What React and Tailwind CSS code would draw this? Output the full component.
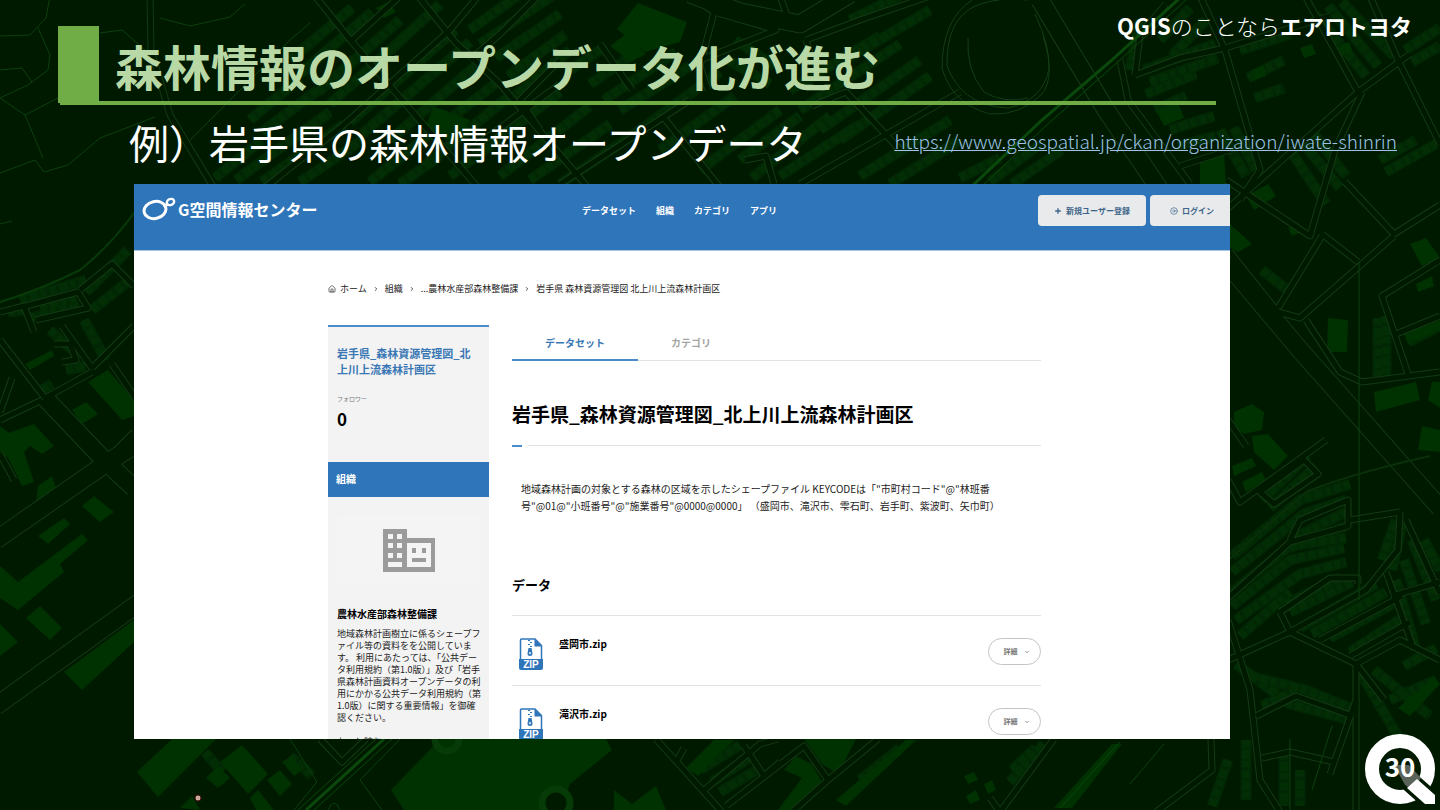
import React from 'react';
import { ChevronDown, ChevronRight, CircleArrowRight, House, Plus } from 'lucide-react';

const navItems = ['データセット', '組織', 'カテゴリ', 'アプリ'];

const crumbs = ['ホーム', '組織', '...農林水産部森林整備課', '岩手県 森林資源管理図 北上川上流森林計画区'];

const orgLines = [
  '地域森林計画樹立に係るシェープフ',
  'ァイル等の資料をを公開していま',
  'す。 利用にあたっては、「公共デー',
  'タ利用規約（第1.0版）」及び「岩手',
  '県森林計画資料オープンデータの利',
  '用にかかる公共データ利用規約（第',
  '1.0版）に関する重要情報」を御確',
  '認ください。',
];

const files = ['盛岡市.zip', '滝沢市.zip'];

// rows of small houses, drawn as dashed strokes
const houseRows = [
  'M290 60 L352 8', 'M300 74 L372 12', 'M318 92 L400 20', 'M330 104 L412 30', 'M350 122 L455 30', 'M362 134 L470 42',
  'M250 120 L300 78', 'M262 132 L318 90', 'M215 178 L262 140', 'M236 180 L330 112', 'M262 182 L344 124', 'M300 182 L362 140',
  'M380 60 L440 4', 'M470 30 L520 -6', 'M480 44 L552 -4', 'M496 58 L560 14', 'M508 76 L566 34', 'M410 150 L500 80',
  'M424 166 L512 94', 'M450 176 L560 92', 'M500 176 L590 106', 'M530 180 L610 124', 'M560 184 L640 130', 'M620 110 L690 66',
  'M640 130 L720 72', 'M660 150 L735 96', 'M700 170 L780 110', 'M735 40 L775 66', 'M728 60 L770 84', 'M790 90 L880 36',
  'M800 110 L900 44', 'M820 130 L920 60', 'M780 176 L860 124', 'M845 60 L930 10', 'M850 20 L900 -4', 'M860 176 L950 120',
  'M890 184 L960 140', 'M1144 70 L1215 44', 'M1150 82 L1218 58', 'M1146 94 L1196 74', 'M1155 110 L1186 96', 'M1170 130 L1214 116',
  'M1178 146 L1216 136', 'M1220 130 L1246 176', 'M1234 128 L1256 170', 'M1240 50 L1290 34', 'M1248 78 L1284 60', 'M1255 98 L1284 88',
  'M1315 14 L1366 76', 'M1328 6 L1378 66', 'M1342 2 L1394 56', 'M1405 50 L1440 28', 'M1412 62 L1440 46', 'M1290 150 L1326 204',
  'M1302 142 L1340 188', 'M1314 134 L1346 176', 'M1380 160 L1416 140', 'M1386 172 L1436 144', 'M1262 270 L1290 292',
  'M1378 318 L1378 380', 'M1386 316 L1386 378', 'M1408 342 L1440 326', 'M1262 500 L1308 456', 'M1270 508 L1316 466',
  'M1232 556 L1300 500 L1350 484', 'M1232 572 L1304 514 L1346 500', 'M1294 538 L1346 512', 'M1290 548 L1346 526',
  'M1232 592 L1290 546 L1346 538', 'M1232 606 L1290 560 L1344 548', 'M1236 620 L1300 574 L1346 562', 'M1286 604 L1340 578',
  'M1290 612 L1352 582', 'M1240 636 L1290 592', 'M1300 628 L1376 584', 'M1312 634 L1386 592', 'M1330 638 L1400 600',
  'M1350 652 L1402 618', 'M1382 560 L1396 520', 'M1392 570 L1402 524', 'M1404 560 L1426 624', 'M1412 540 L1436 600',
  'M1396 580 L1416 650', 'M1424 540 L1440 570', 'M1236 664 L1290 704 L1350 720', 'M1250 676 L1306 690 L1350 708',
  'M1262 706 L1298 690', 'M1246 740 L1246 800', 'M1360 672 L1400 740', 'M1374 670 L1430 716', 'M1390 700 L1436 680',
  'M1404 666 L1436 648', 'M40 308 L76 298', 'M30 318 L80 306', 'M8 312 L24 310', 'M50 330 L72 350', 'M84 320 L106 360',
  'M92 310 L130 280', 'M66 370 L86 366', 'M86 292 L128 250', 'M20 300 L86 280', 'M42 390 L52 384', 'M700 770 L740 745',
  'M712 782 L752 756', 'M720 792 L760 768', 'M860 780 L900 748', 'M1012 770 L1036 748', 'M1010 782 L1044 744',
  'M205 752 L222 772', 'M290 756 L312 776', 'M1284 752 L1284 806', 'M1300 770 L1300 806', 'M1228 760 L1212 806',
  'M510 100 L570 50', 'M390 140 L480 62', 'M370 182 L420 142', 'M400 184 L440 156', 'M570 70 L606 46', 'M590 84 L640 50',
  'M604 100 L676 52', 'M740 160 L800 116', 'M752 178 L830 116', 'M840 140 L930 76', 'M960 178 L1000 158', 'M990 182 L1040 144',
  'M1012 184 L1062 150', 'M1130 70 L1140 20', 'M1160 40 L1190 8', 'M1172 56 L1206 20',
];

const buildings = [
  'M617 29 L638 3 L687 22 L680 42 L645 52 Z', 'M433 106 L470 120 L456 142 L424 132 Z', 'M610 46 L626 34 L646 54 L630 62 Z',
  'M1156 110 L1178 102 L1184 118 L1164 126 Z', 'M1200 162 L1224 154 L1226 184 L1200 184 Z', 'M1410 244 L1426 238 L1440 258 L1422 266 Z',
  'M1246 196 L1268 184 L1276 196 L1254 210 Z', 'M1230 224 L1252 244 L1238 252 L1230 248 Z', 'M1328 318 L1348 320 L1347 352 L1327 352 Z',
  'M1374 392 L1416 382 L1420 400 L1376 412 Z', 'M1432 382 L1440 382 L1440 408 L1428 400 Z', 'M1422 426 L1440 430 L1440 452 L1418 450 Z',
  'M1234 412 L1252 404 L1264 412 L1262 430 L1244 434 L1234 426 Z', 'M1252 436 L1268 434 L1288 456 L1274 470 L1254 452 Z',
  'M1242 482 L1262 472 L1266 480 L1246 492 Z', 'M1232 466 L1252 458 L1256 466 L1234 476 Z', 'M1416 284 L1432 276 L1434 286 L1418 292 Z',
  'M1404 334 L1440 320 L1440 330 L1408 344 Z', 'M1288 228 L1298 222 L1302 232 L1292 236 Z',
  'M25 364 L52 350 L54 356 L30 370 Z', 'M88 382 L108 370 L134 400 L134 416 L122 420 Z', 'M72 410 L86 402 L98 414 L82 424 Z',
  'M0 436 L34 424 L54 446 L42 454 L30 446 L24 452 L34 482 L22 486 L8 458 L0 452 Z', 'M38 486 L52 476 L56 488 L36 504 Z',
  'M82 506 L94 496 L114 512 L100 522 Z', 'M38 536 L64 518 L70 524 L48 544 Z', 'M0 566 L18 582 L82 534 L88 540 L60 564 L64 572 L18 610 L0 598 Z',
  'M26 618 L40 606 L62 628 L50 640 Z', 'M0 624 L18 642 L0 656 Z', 'M64 672 L134 620 L134 642 L82 690 Z', 'M0 426 L10 434 L0 438 Z',
  'M137 772 L172 739 L216 739 L158 797 Z', 'M220 762 L242 745 L268 774 L248 794 Z', 'M206 778 L218 766 L230 778 L218 788 Z',
  'M267 780 L280 770 L292 784 L280 796 Z', 'M282 762 L292 756 L302 770 L294 776 Z', 'M250 798 L258 790 L274 810 L256 810 Z',
  'M391 790 L440 739 L606 739 L612 750 L570 784 L560 810 L404 810 Z', 'M614 790 L632 804 L656 786 L666 810 L614 810 Z',
  'M686 768 L714 740 L734 740 L698 776 Z', 'M778 810 L802 778 L784 770 L796 756 L812 764 L824 786 L796 810 Z',
  'M804 739 L856 739 L838 774 L822 764 Z', 'M836 800 L906 740 L916 740 L846 806 Z', 'M964 776 L974 772 L978 780 L968 784 Z',
  'M966 796 L976 790 L980 800 L970 804 Z', 'M984 784 L992 780 L996 790 L988 794 Z', 'M1054 808 L1112 744 L1122 744 L1072 808 Z',
  'M180 808 L192 796 L200 810 Z', 'M1398 708 L1434 676 L1440 684 L1410 716 Z', 'M1300 48 L1312 44 L1316 54 L1304 58 Z',
  'M1338 46 L1350 42 L1352 52 L1340 56 Z', 'M1252 70 L1264 66 L1266 76 L1254 80 Z', 'M376 8 L388 2 L396 12 L384 18 Z',
];

const streets = [
  'M315 -4 L352 42 L480 190', 'M418 -4 L455 42 L500 84 L590 190', 'M480 -6 L450 30 L340 128 L262 190', 'M352 40 L400 -4',
  'M150 -4 L151 50 L170 115 L215 190', 'M538 -4 L500 34 L470 60', 'M560 60 L520 100 L540 130', 'M600 44 L632 90',
  'M470 150 L560 84', 'M560 184 L690 100', 'M664 118 L722 190', 'M690 -4 L714 12 L776 30 L700 60', 'M714 12 L700 66 L708 90',
  'M780 -4 L790 24', 'M806 40 L860 20 L930 -4', 'M806 40 L812 60', 'M812 106 L846 92 L900 150', 'M745 160 L766 156 L774 184', 'M800 184 L960 92',
  'M1135 75 L1140 34 L1166 4', 'M1200 -4 L1225 50 L1260 170 L1240 200', 'M1135 75 L1180 58 L1225 48 L1330 16', 'M1120 60 L1128 100 L1190 184',
  'M1180 166 L1230 150', 'M1370 -4 L1398 60 L1440 144', 'M1305 -4 L1358 92 L1410 54', 'M1362 92 L1335 150 L1310 236 L1226 180',
  'M1358 92 L1262 178 L1226 210', 'M1345 182 L1394 234 L1440 205', 'M1394 236 L1300 318 L1278 312 L1230 252', 'M1322 236 L1278 308', 'M1358 262 L1322 234',
  'M1440 260 L1382 296 L1408 374', 'M1396 334 L1440 316', 'M1306 320 L1340 372 L1362 382 L1440 372', 'M1228 420 L1246 446', 'M1228 480 L1240 502 L1326 440',
  'M1260 492 L1304 460 L1318 474 L1274 504 Z', 'M1228 598 L1290 542 L1348 526 L1348 500 L1300 520 L1290 540', 'M1350 520 L1400 512', 'M1400 512 L1398 550 L1366 590 L1290 632',
  'M1280 612 L1330 578 L1358 578 L1358 584', 'M1280 612 L1290 632 L1356 664 L1384 700', 'M1320 640 L1402 596', 'M1350 656 L1410 622', 'M1386 572 L1412 644',
  'M1406 520 L1440 594', 'M1392 596 L1440 582', 'M1228 660 L1290 632', 'M1228 620 L1250 690 L1260 780 L1280 812', 'M1256 716 L1296 696 L1330 708 L1352 716',
  'M1356 664 L1356 700 L1330 774', 'M1356 664 L1400 640 L1440 660', 'M1262 758 L1290 752 L1334 762', 'M1211 739 L1212 770 L1156 812', 'M1356 700 L1356 812',
  'M0 312 L24 306 L34 332', 'M26 306 L78 292 L88 308 L36 320', 'M80 290 L112 264 L134 286', 'M62 326 L92 368', 'M92 368 L134 326', 'M0 340 L45 398 L92 372',
  'M0 420 L42 400', 'M12 378 L0 412', 'M112 364 L134 396', 'M54 344 L70 344 L76 360 L62 362', 'M0 454 L14 480', 'M114 452 L134 432',
  'M656 739 L722 812', 'M676 762 L684 748', 'M704 790 L760 744 L778 739', 'M726 806 L804 746 L828 780 L792 812', 'M828 780 L878 739',
  'M744 746 L764 776 L780 762', 'M1054 739 L1000 812 L990 798', 'M320 739 L342 762 L366 739',
];

const avenues = [
  'M45 398 L106 462 L134 488', 'M-4 540 L108 462 L140 442', 'M-4 706 L140 602', 'M1040 0 L1106 110 L1160 190', 'M1226 262 L1300 350 L1440 508',
  'M690 -6 L740 12 L800 24 L850 -6',
];

const contours = [
  'M0 36 L30 35 L46 18 L50 -4', 'M38 28 L50 55 L48 70 L28 85 L0 98', 'M0 98 L25 115 L43 158', 'M25 115 L62 96', 'M0 70 L22 68 L32 82',
  'M0 173 L35 160 L44 172 L68 165 L100 138 L155 117', 'M160 18 L190 26 L230 17 L245 4', 'M100 33 L122 30 L145 50', 'M0 224 L12 221',
  'M310 23 L290 40 L190 140', 'M1290 739 L1290 812', 'M1359 262 L1359 600', 'M1164 744 L1130 784', 'M290 739 L317 782 L294 810', 'M400 739 L360 780 L382 810',
  'M328 810 Q334 796 340 810', 'M1332 726 L1312 790',
];

function MapBackdrop() {
  return (
    <svg
      className="absolute inset-0 h-full w-full"
      viewBox="0 0 1440 810"
      preserveAspectRatio="xMidYMid slice"
      fill="none"
      aria-hidden="true"
    >
      <rect width="1440" height="810" fill="#001a00" />
      <g stroke="#022704" strokeWidth="11">
        {houseRows.map((d) => <path key={d} d={d} />)}
      </g>
      <g stroke="#032d05" strokeWidth="8" strokeDasharray="7 3 9 2 6 4">
        {houseRows.map((d) => <path key={d} d={d} />)}
      </g>
      <g fill="#003100">
        {buildings.map((d) => <path key={d} d={d} />)}
      </g>
      <g stroke="#143a15" strokeLinejoin="round">
        {avenues.map((d) => <path key={d} d={d} strokeWidth="19" />)}
        {streets.map((d) => <path key={d} d={d} strokeWidth="7" />)}
      </g>
      <g stroke="#001a00" strokeLinejoin="round">
        {avenues.map((d) => <path key={d} d={d} strokeWidth="17" />)}
        {streets.map((d) => <path key={d} d={d} strokeWidth="5" />)}
      </g>
      <g stroke="#0d400e" strokeWidth="1" strokeLinejoin="round">
        {contours.map((d) => <path key={d} d={d} />)}
      </g>
      {/* interchange loop */}
      <g stroke="#143d15">
        <path d="M1035 14 Q1050 46 1049 68 Q1044 100 1008 108 Q962 106 947 66 Q946 20 975 6 Q1000 -4 1028 0" />
        <path d="M1043 36 Q1056 76 1042 94 Q1020 116 990 114 Q952 104 942 68 Q942 20 972 0" />
        <path d="M968 38 Q966 70 984 92 Q1004 104 1028 98" />
      </g>
      {/* river bank and railways */}
      <path d="M134 213 Q110 246 80 270 Q40 290 0 302" stroke="#073a08" strokeWidth="2" />
      <path d="M1226 562 L1306 492 Q1350 474 1430 456" stroke="#093009" strokeWidth="2" />
      <g stroke="#0a480b" strokeWidth="1">
        <path d="M1182 -4 L1112 60 L1042 120 L970 188" strokeWidth="3" />
        <path d="M1188 -2 L1120 60 L1048 124 L980 188" />
        <path d="M384 739 L306 810" strokeWidth="3" />
        <path d="M392 739 L314 810" />
        <path d="M376 739 L298 810" />
        <path d="M1120 742 L1060 808" />
      </g>
      <g stroke="#063a07" strokeWidth="7">
        <circle cx="447" cy="739" r="12" />
        <circle cx="556" cy="803" r="14" fill="#001a00" />
      </g>
      <circle cx="198" cy="798" r="3" fill="#c9a99b" stroke="#431008" strokeWidth="1" />
    </svg>
  );
}

function BrandMark() {
  return (
    <svg className="h-6 w-9" viewBox="0 0 36 24" fill="none" stroke="#fff" aria-hidden="true">
      <ellipse cx="13" cy="13" rx="11" ry="8.500" strokeWidth="3" transform="rotate(-12 13 13)" />
      <ellipse cx="28.500" cy="5" rx="3.800" ry="3" strokeWidth="2.400" transform="rotate(-25 28.500 5)" />
      <path d="M22 10 L26 6.500" strokeWidth="3" />
    </svg>
  );
}

function OfficeIcon() {
  return (
    <svg className="h-[43px] w-[52px]" viewBox="0 0 52 43" aria-hidden="true">
      <path
        fill="#9b9b9b"
        fillRule="evenodd"
        d="M0 0H24V9H52V43H0Z M5 5V10H10V5Z M14 5V10H19V5Z M5 14V19H10V14Z M14 14V19H19V14Z M5 24V29H10V24Z M14 24V29H19V24Z M5 33V38H19V33Z M24 14V38H48V14Z"
      />
      <path fill="#9b9b9b" d="M29 19H33V24H29Z M39 19H43V24H39Z M29 29H43V33H29Z" />
    </svg>
  );
}

function ZipIcon() {
  return (
    <svg className="h-8 w-6 shrink-0" viewBox="0 0 24 32" aria-hidden="true">
      <path d="M1.500 22V2Q1.500 1 2.500 1H16L22.500 7.500V22" fill="#fff" stroke="#2f75ba" strokeWidth="1.500" />
      <path d="M15.500 1V8.500H23Z" fill="#2f75ba" />
      <path d="M9 2.500h2M11 4.500h2M9 6.500h2M11 8.500h2" stroke="#2f75ba" strokeWidth="1" />
      <path d="M9.500 10H12.500L13.500 15.500Q13.500 18 11 18Q8.500 18 8.500 15.500Z" fill="#2f75ba" />
      <rect x="10.200" y="14" width="1.600" height="2.200" rx=".8" fill="#fff" />
      <path d="M0 21H24V30Q24 32 22 32H2Q0 32 0 30Z" fill="#2f75ba" />
      <text x="12" y="30" textAnchor="middle" fill="#fff" fontSize="10" fontWeight="700" fontFamily="Liberation Sans, sans-serif">ZIP</text>
    </svg>
  );
}

function PageBadge({ page }) {
  return (
    <div className="absolute right-1 bottom-1 h-[72px] w-[72px]">
      <svg className="h-full w-full" viewBox="0 0 72 72" aria-hidden="true">
        <circle cx="36" cy="35" r="28" fill="#001a00" stroke="#fff" strokeWidth="14" />
        <path d="M53 45 L71 61 V70 H61 L43 54 Z" fill="#001a00" stroke="#001a00" strokeWidth="7" />
        <path d="M30 31 L45 31 L57 44 L48 56 L41 51 Z" fill="#8a8a8a" fillOpacity=".65" />
        <path d="M53 45 L71 61 V70 H61 L43 54 Z" fill="#fff" />
      </svg>
      <span className="absolute inset-0 flex items-center justify-center pb-2 text-[26px] leading-none font-bold text-white">{page}</span>
    </div>
  );
}

function SiteHeader() {
  return (
    <header className="flex h-[67px] items-start justify-between border-b border-[#a9c8e6] bg-[#2f75ba] text-white">
      <a href="#home" className="flex w-[448px] items-center pt-[13px] pl-2">
        <BrandMark />
        <span className="text-[16px] leading-6 font-bold">G空間情報センター</span>
      </a>
      <nav className="mr-auto flex gap-5 pt-[21px] text-[9px] leading-3 font-bold">
        {navItems.map((item) => (
          <a key={item} href="#nav">{item}</a>
        ))}
      </nav>
      <div className="-mr-4 flex gap-1 pt-[11px] text-[8px] font-bold text-[#3c6488]">
        <button type="button" className="flex h-[31px] w-[108px] items-center justify-center gap-1 rounded bg-[#e9eaec]">
          <Plus className="h-2 w-2" strokeWidth={4} />
          新規ユーザー登録
        </button>
        <button type="button" className="flex h-[31px] w-24 items-center gap-1 rounded bg-[#e9eaec] pl-5">
          <CircleArrowRight className="h-2 w-2" strokeWidth={2} />
          ログイン
        </button>
      </div>
    </header>
  );
}

function Sidebar() {
  return (
    <aside className="w-[161px] shrink-0 self-start border-t-2 border-[#4a8bc9] bg-[#f3f3f3] text-black">
      <div className="h-[135px] px-[9px] pt-[18px]">
        <h2 className="text-[11px] leading-4 font-bold text-[#3a78b5]">岩手県_森林資源管理図_北<br />上川上流森林計画区</h2>
        <p className="mt-4 text-[6px] leading-3 text-[#777]">フォロワー</p>
        <p className="mt-0.5 text-[17px] leading-6 font-bold">0</p>
      </div>
      <h3 className="bg-[#2f75ba] px-2 pb-0.5 text-[10px] leading-[33px] font-bold text-white">組織</h3>
      <div className="px-[9px] pt-[19px]">
        <div className="flex h-[68px] items-center justify-center bg-[#f4f4f4]">
          <OfficeIcon />
        </div>
        <h4 className="mt-[22px] text-[10px] leading-4 font-bold">農林水産部森林整備課</h4>
        <p className="mt-1.5 text-[9px] leading-3 whitespace-nowrap text-[#222]">
          {orgLines.map((line) => (
            <span key={line} className="block">{line}</span>
          ))}
        </p>
        <a href="#more" className="mt-3 block text-[9px] leading-3 text-[#222]">もっと読む</a>
      </div>
    </aside>
  );
}

function Dataset() {
  return (
    <section className="min-w-0 flex-1 text-black">
      <div className="flex h-9 border-b border-[#e2e2e2] text-[10px] leading-9 font-bold">
        <a href="#dataset" className="h-9 border-b-2 border-[#4a8bc9] px-[33px] text-[#3a78b5]">データセット</a>
        <a href="#category" className="px-[33px] text-[#a5a5a5]">カテゴリ</a>
      </div>
      <h1 className="mt-[39px] text-[19px] leading-7 font-bold">岩手県_森林資源管理図_北上川上流森林計画区</h1>
      <div className="mt-[17px] flex gap-1.5">
        <span className="h-0.5 w-2.5 bg-[#4a8bc9]" />
        <span className="h-px flex-1 bg-[#e2e2e2]" />
      </div>
      <p className="mt-[33px] px-[9px] text-[10px] leading-[17px] text-[#222]">
        地域森林計画の対象とする森林の区域を示したシェープファイル KEYCODEは「"市町村コード"@"林班番<br />
        号"@01@"小班番号"@"施業番号"@0000@0000」 （盛岡市、滝沢市、雫石町、岩手町、紫波町、矢巾町）
      </p>
      <h2 className="mt-[61px] text-[13px] leading-5 font-bold">データ</h2>
      <ul className="mt-5">
        {files.map((name) => (
          <li key={name} className="flex h-[70px] items-start border-t border-[#e2e2e2] pt-[22px] pl-[7px]">
            <ZipIcon />
            <a href="#file" className="ml-4 text-[10px] leading-3 font-bold">{name}</a>
            <button type="button" className="ml-auto flex h-[27px] w-[53px] items-center justify-center gap-1.5 rounded-full border border-[#c4c4c4] pl-1 text-[7px] font-bold text-[#777]">
              詳細
              <ChevronDown className="h-1.5 w-1.5" strokeWidth={3} />
            </button>
          </li>
        ))}
      </ul>
    </section>
  );
}

export default function App() {
  return (
    <div className="relative flex h-screen flex-col overflow-hidden bg-[#001a00] font-['Noto_Sans_CJK_JP',sans-serif] text-white">
      <MapBackdrop />

      <div className="relative flex h-[101px] items-end justify-between pr-7 pl-[58px]">
        <div className="flex h-[75px]">
          <div className="h-[77px] w-[41px] bg-[#70ad47]" />
          <h1 className="pt-1.5 pl-4 text-5xl leading-[67px] font-bold whitespace-nowrap text-[#b8d9a6]">森林情報のオープンデータ化が進む</h1>
        </div>
        <p className="mt-2.5 self-start text-[22px] leading-[30px] font-light whitespace-nowrap">
          <b className="font-bold">QGIS</b>のことなら<b className="font-bold">エアロトヨタ</b>
        </p>
      </div>
      <div className="relative mr-[224px] ml-[60px] h-1 shrink-0 bg-[#70ad47]" />

      <div className="relative flex h-[79px] shrink-0 items-center justify-between pr-[43px] pb-1.5 pl-[129px] whitespace-nowrap">
        <h2 className="text-[40px] leading-[60px] font-normal">例）岩手県の森林情報オープンデータ</h2>
        <a href="https://www.geospatial.jp/ckan/organization/iwate-shinrin" className="text-[19px] font-light text-[#9dc3e6] underline">
          https://www.geospatial.jp/ckan/organization/iwate-shinrin
        </a>
      </div>

      <main className="relative mr-[210px] mb-[71px] ml-[134px] min-h-0 flex-1 overflow-hidden bg-white">
        <SiteHeader />
        <div className="pr-[189px] pl-[194px]">
          <nav className="flex items-center gap-1.5 pt-8 text-[9px] leading-3 whitespace-nowrap text-[#222]">
            <House className="-mr-0.5 h-2 w-2" strokeWidth={2} />
            {crumbs.map((crumb, i) => (
              <React.Fragment key={crumb}>
                {i > 0 && <ChevronRight className="h-1.5 w-1.5" strokeWidth={3} />}
                <a href="#crumb">{crumb}</a>
              </React.Fragment>
            ))}
          </nav>
          <div className="mt-[30px] flex items-start gap-[23px]">
            <Sidebar />
            <Dataset />
          </div>
        </div>
      </main>

      <PageBadge page={30} />
    </div>
  );
}
